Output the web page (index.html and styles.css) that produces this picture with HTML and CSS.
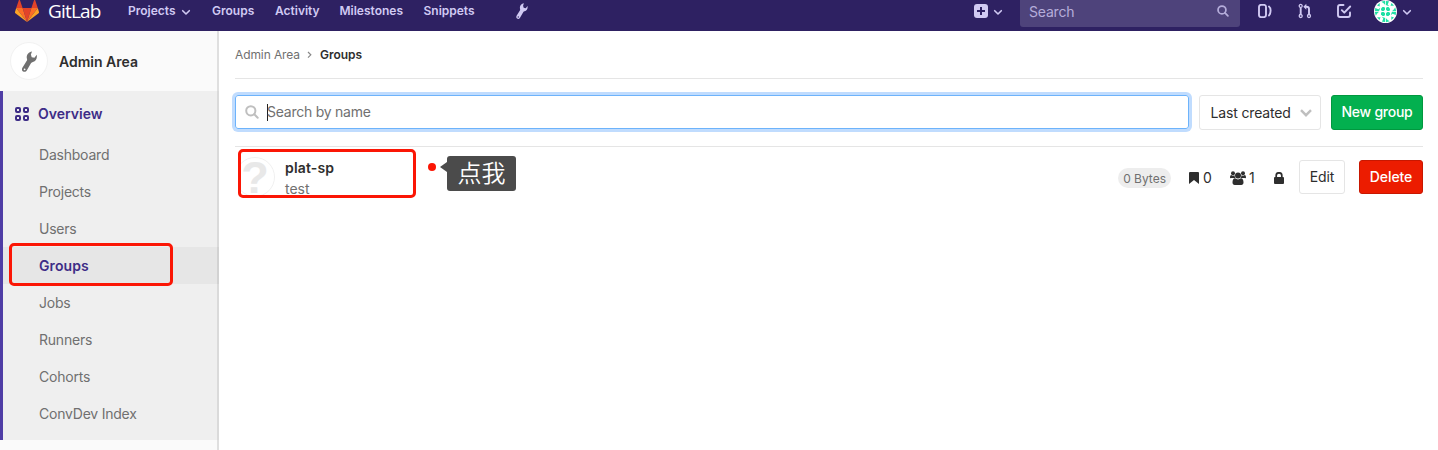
FILE: index.html
```html
<!DOCTYPE html>
<html lang="en">
<head>
<meta charset="utf-8">
<title>Groups · Admin Area · GitLab</title>
<link rel="stylesheet" href="styles.css">
</head>
<body>
<svg class="defs" width="0" height="0">
  <symbol id="wrench" viewBox="0 0 15 21"><path fill="currentColor" fill-rule="evenodd" d="M10 .4 8.900 3.600l.8 2.700 2.700.5 2.400-3c.5 3.300-.8 6.400-3.900 7.100-.8.200-1.400.5-1.800 1.200L4.900 19.300c-.9 1.600-2.500 1.900-3.800 1.200-1.200-.8-1.500-2.200-.7-3.700L4.900 9.500c.3-.6.2-1.200 0-1.900C4 4.200 6.400.9 10 .4zM2.600 17.400a.9.900 0 1 0 0 1.800.9.900 0 0 0 0-1.800z"/></symbol>
  <symbol id="chevron" viewBox="0 0 10 7"><path fill="none" stroke="currentColor" stroke-width="1.600" stroke-linecap="round" stroke-linejoin="round" d="M1.700 1.700 5 5l3.300-3.300"/></symbol>
  <symbol id="lens" viewBox="0 0 14 14"><g fill="none" stroke="currentColor" stroke-width="2"><circle cx="5.800" cy="5.800" r="4.600"/><path stroke-linecap="round" d="m9.300 9.300 3.400 3.400"/></g></symbol>
</svg>
<header class="navbar">
  <a class="brand">
    <svg class="tanuki" viewBox="0 0 24 24"><path fill="#e24329" d="m12 24 4.400-14H7.600z"/><path fill="#fc6d26" d="M12 24 7.600 10H1.200zM12 24l4.400-14h6.400z"/><path fill="#fca326" d="M1.200 10 0 14.100c-.1.400 0 .8.400 1.100L12 24zM22.800 10l1.200 4.100c.1.400 0 .8-.4 1.100L12 24z"/><path fill="#e24329" d="M1.200 10h6.400L4.800 1.700c-.1-.4-.7-.4-.8 0zM22.800 10h-6.400l2.800-8.300c.1-.4.700-.4.800 0z"/></svg>
    <span class="wordmark">GitLab</span>
  </a>
  <nav class="menu">
    <a class="m-projects">Projects</a><svg class="chev"><use href="#chevron"/></svg>
    <a class="m-groups">Groups</a><a class="m-activity">Activity</a><a class="m-milestones">Milestones</a><a class="m-snippets">Snippets</a>
    <svg class="nav-wrench"><use href="#wrench"/></svg>
  </nav>
  <div class="tools">
    <svg class="plus" viewBox="0 0 14 14"><rect width="14" height="14" rx="3" fill="#d1caf3"/><path stroke="#2e2162" stroke-width="2" d="M7 3v8M3 7h8"/></svg>
    <svg class="chev plus-chev"><use href="#chevron"/></svg>
    <div class="nav-search"><span>Search</span><svg><use href="#lens"/></svg></div>
    <svg class="issues" viewBox="0 0 14 14"><g fill="none" stroke="currentColor" stroke-width="1.900"><rect x="1" y=".9" width="7" height="12.200" rx="2"/><path stroke-linecap="round" d="M11 2.500c1.400 1 1.600 2 1.600 4s-.5 3.700-1.600 5"/></g></svg>
    <svg class="merge" viewBox="0 0 14 16"><g fill="none" stroke="currentColor" stroke-width="1.300"><circle cx="2.700" cy="2.900" r="1.500"/><circle cx="2.700" cy="13" r="1.500"/><circle cx="11" cy="13" r="1.500"/><path stroke-width="1.900" d="M2.700 4.500v7M11 11.500V6c0-1.600-.8-2.300-2.500-2.300H7"/></g><path fill="currentColor" d="m5.300 3.700 3-3v6z"/></svg>
    <svg class="todo" viewBox="0 0 16 16"><g fill="none" stroke="currentColor" stroke-width="1.900" stroke-linecap="round" stroke-linejoin="round"><path d="M7.500 2H4a2 2 0 0 0-2 2v8a2 2 0 0 0 2 2h8a2 2 0 0 0 2-2V9.500"/><path d="M5.800 7.200 8.300 9.700l5.900-6.200"/></g></svg>
    <svg class="avatar" viewBox="0 0 23 23"><circle cx="11.500" cy="11.500" r="11.500" fill="#fff"/><g fill="#1fe0a5"><g id="tile"><path d="M7 8.500 8.500 7h1.700L11 8v1.700L9.700 11H8L7 10z"/><path d="M7.200 1.800 11 .8v4L9.300 3zM1.200 8l3.300 1.300 1.800-1.500L5 11.200H1zM3 5.500 5.700 3v3.500z"/></g><use href="#tile" transform="rotate(90 11.500 11.500)"/><use href="#tile" transform="rotate(180 11.500 11.500)"/><use href="#tile" transform="rotate(270 11.500 11.500)"/></g></svg>
    <svg class="chev user-chev"><use href="#chevron"/></svg>
  </div>
</header>
<div class="page">
  <aside class="sidebar">
    <div class="context"><span class="context-icon"><svg><use href="#wrench"/></svg></span><b>Admin Area</b></div>
    <div class="section">
      <div class="overview"><svg viewBox="0 0 14 14"><g fill="none" stroke="currentColor" stroke-width="2"><rect x="1" y="1" width="4" height="4" rx="1"/><rect x="9" y="1" width="4" height="4" rx="1"/><rect x="1" y="9" width="4" height="4" rx="1"/><rect x="9" y="9" width="4" height="4" rx="1"/></g></svg><b>Overview</b></div>
      <ul>
        <li>Dashboard</li><li>Projects</li><li>Users</li>
        <li class="active">Groups<i class="mark mark-nav"></i></li>
        <li>Jobs</li><li>Runners</li><li>Cohorts</li><li>ConvDev Index</li>
      </ul>
    </div>
  </aside>
  <main class="content">
    <div class="crumbs"><span>Admin Area</span><svg viewBox="0 0 5 8"><path fill="none" stroke="#888" stroke-width="1.200" d="m1 1 2.800 2.800L1 6.600"/></svg><b>Groups</b></div>
    <div class="filters">
      <div class="search"><svg><use href="#lens"/></svg><i class="caret"></i><span>Search by name</span></div>
      <div class="sort"><span>Last created</span><svg viewBox="0 0 12 8"><path fill="none" stroke="#bfbfbf" stroke-width="2.400" d="m1 1.200 5 5 5-5"/></svg></div>
      <div class="btn new">New group</div>
    </div>
    <div class="group">
      <div class="group-avatar">?</div>
      <div class="group-info"><b>plat-sp</b><span>test</span></div>
      <div class="stats">
        <span class="size">0 Bytes</span>
        <svg class="bookmark" viewBox="0 0 10 12"><path fill="currentColor" d="M0 1q0-1 1-1h8q1 0 1 1v11L5 8l-5 4z"/></svg><span class="n0">0</span>
        <svg class="people" viewBox="0 0 16 14"><g fill="currentColor"><circle cx="3" cy="2.200" r="2"/><circle cx="13" cy="2.200" r="2"/><circle cx="8" cy="4.500" r="3"/><path d="M0 6.500C0 5 .5 4 1.200 4c1 .8 2.200.8 3.300.3.100 1.200.4 2 1 2.700H1.500Q0 7.500 0 6.500zM16 6.500C16 5 15.500 4 14.800 4c-1 .8-2.200.8-3.300.3-.1 1.200-.4 2-1 2.700h4Q16 7.500 16 6.500zM2.500 11.500C2.500 9 3.400 7.300 5 7.300c2 1.500 4 1.500 6 0 1.600 0 2.500 1.700 2.500 4.200 0 1.500-.8 2.500-2.200 2.500H4.700c-1.400 0-2.200-1-2.200-2.500z"/></g></svg><span class="n1">1</span>
        <svg class="lock" viewBox="0 0 10 12"><rect y="5" width="10" height="7" rx="1" fill="currentColor"/><path fill="none" stroke="currentColor" stroke-width="1.700" d="M2.200 5.500V3.500a2.800 2.700 0 0 1 5.600 0v2"/></svg>
      </div>
      <div class="btn edit">Edit</div><div class="btn delete">Delete</div>
      <i class="mark mark-group"></i>
      <i class="dot"></i>
      <div class="callout">点我</div>
    </div>
  </main>
</div>
</body>
</html>
```
FILE: styles.css
```css
* { box-sizing: border-box; }
body { margin: 0; height: 450px; overflow: hidden; background: #fff; color: #2e2e2e; font: 14px/20px Inter, "Noto Sans CJK SC", sans-serif; white-space: nowrap; }
svg { display: block; flex: none; }
b { font-weight: 600; }
.defs { position: absolute; }
.navbar { display: flex; height: 31px; background: #2e2162; color: #d1caf3; }
.brand { display: flex; width: 128px; padding-left: 15px; color: #fff; }
.tanuki { width: 24px; height: 24px; margin-top: -2px; }
.wordmark { margin: 0 0 0 9px; font: 19px/22px "Open Sans", sans-serif; letter-spacing: -.8px; }
.menu { display: flex; height: 22px; line-height: 22px; font-size: 12px; font-weight: 600; }
.chev { width: 10px; height: 7px; margin-top: 9px; }
.m-projects { width: 53px; }
.m-groups { width: 63px; margin-left: 21px; }
.m-activity { width: 64.500px; }
.m-milestones { width: 84px; }
.m-snippets { width: 92px; }
.nav-wrench { width: 12px; height: 16px; margin-top: 3px; }
.tools { display: flex; margin-left: auto; padding-right: 26px; }
.plus { width: 14px; height: 14px; margin: 4px 5px 0 0; }
.nav-search { display: flex; justify-content: space-between; width: 220px; height: 27px; margin: 0 18px 0 17px; padding: 0 11px 0 9px; border-radius: 0 0 3px 3px; background: #4e437b; color: #b5adda; line-height: 24px; letter-spacing: -.2px; }
.nav-search svg { width: 12px; height: 12px; margin-top: 5px; }
.issues { width: 14px; height: 14px; margin: 4px 26px 0 0; }
.merge { width: 14px; height: 16px; margin: 3px 24px 0 0; }
.todo { width: 16px; height: 16px; margin: 3px 22px 0 0; }
.avatar { width: 23px; height: 23px; margin-right: 5px; }
.page { display: flex; height: 419px; }
.sidebar { width: 219px; background: #fafafa; box-shadow: inset -2px 0 #dfdfdf; }
.context { display: flex; align-items: center; height: 60px; padding-left: 10px; }
.context b { padding-top: 2px; }
.context-icon { display: flex; align-items: center; justify-content: center; width: 38px; height: 38px; margin-right: 11px; border-radius: 50%; background: #fff; border: 1px solid #f2f2f2; color: #707070; }
.context-icon svg { width: 15px; height: 21px; }
.section { height: 349px; border-left: 3px solid #4f3da5; background: #efefef; box-shadow: inset -2px 0 #dadada; }
.overview { display: flex; align-items: center; height: 45px; padding-left: 12px; gap: 9px; color: #3e2d87; }
.overview svg { width: 14px; height: 14px; }
ul { list-style: none; margin: 0; padding: 0; }
li { position: relative; height: 37px; padding-left: 36px; line-height: 37px; color: #707070; letter-spacing: -.22px; }
.active { background: #e6e6e6; box-shadow: inset -2px 0 #d2d2d2; color: #3e2d87; font-weight: 600; letter-spacing: .1px; }
.mark { position: absolute; border: 3px solid #fb1605; border-radius: 5px; }
.mark-nav { left: 6px; top: -4px; width: 164px; height: 43px; }
.content { flex: 1; padding: 0 15px 0 16px; }
.crumbs { display: flex; align-items: center; height: 48px; border-bottom: 1px solid #e5e5e5; font-size: 12px; color: #707070; letter-spacing: -.1px; }
.crumbs svg { width: 5px; height: 8px; margin: 0 8px 0 7px; }
.crumbs b { color: #2e2e2e; letter-spacing: 0; }
.filters { display: flex; height: 68px; padding-top: 16px; border-bottom: 1px solid #e5e5e5; }
.search { display: flex; align-items: center; width: 954px; height: 34px; margin-right: 10px; padding-left: 9px; border: 1px solid #6db3fb; border-radius: 3px; box-shadow: 0 0 0 3px #c0dcfe; color: #707070; letter-spacing: -.25px; }
.search svg { width: 14px; height: 14px; margin-right: 8px; color: #bfbfbf; }
.caret { width: 1px; height: 17px; margin-right: -1px; background: #222; }
.sort { display: flex; align-items: center; width: 122px; height: 35px; margin-right: 10px; padding-left: 10.500px; border: 1px solid #e5e5e5; border-radius: 3px; letter-spacing: -.15px; }
.sort svg { width: 12px; height: 8px; margin-left: 9px; }
.btn { display: flex; align-items: center; justify-content: center; height: 34px; border: 1px solid #e5e5e5; border-radius: 3px; }
.new { width: 92px; height: 35px; padding-bottom: 1px; background: #03b04f; border-color: #01983f; color: #fff; font-weight: 500; letter-spacing: -.25px; }
.group { position: relative; display: flex; height: 65px; padding-top: 13px; }
.group-avatar { width: 40px; height: 40px; margin-top: -3px; border: 1px solid #f0f0f0; border-radius: 50%; color: #e8e8e8; font: bold 45px/39px "Liberation Sans", sans-serif; text-align: center; clip-path: inset(0 0 0 4px); }
.group-info { display: flex; flex-direction: column; margin: -3px auto 0 10px; line-height: 21px; }
.group-info b { letter-spacing: .15px; }
.group-info span { color: #707070; }
.stats { display: flex; align-items: center; height: 36px; }
.size { height: 20px; margin-right: 18px; padding: 1px 5px 0; border-radius: 10px; background: #ededed; color: #707070; font-size: 12px; }
.bookmark { width: 10px; height: 12px; margin-right: 4px; }
.n0 { width: 27px; }
.people { width: 16px; height: 14px; margin-right: 3px; }
.n1 { width: 25px; }
.lock { width: 10px; height: 12px; margin-right: 15px; }
.edit { width: 46px; margin-right: 14px; letter-spacing: -.1px; }
.delete { width: 64px; background: #ec1c00; border-color: #c81700; color: #fff; font-weight: 500; letter-spacing: -.1px; }
.mark-group { left: 3px; top: 2px; width: 178px; height: 49px; }
.dot { position: absolute; left: 193px; top: 16px; width: 8px; height: 8px; border-radius: 50%; background: #fb1605; }
.callout { position: absolute; left: 212px; top: 9px; width: 69px; height: 35px; border-radius: 3px; background: #4b4b4b; color: #fff; font: 350 24px/32px "Noto Sans CJK SC", sans-serif; text-align: center; }
.callout::before { content: ""; position: absolute; left: -7px; top: 6px; border: 5px solid transparent; border-right: 7px solid #4b4b4b; border-left: 0; }
```
